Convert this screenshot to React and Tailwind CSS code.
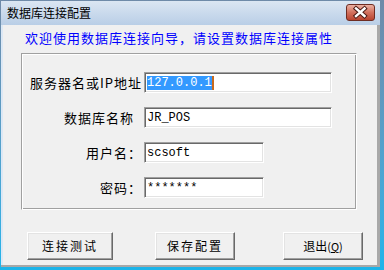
const CJK = "font-['Noto_Sans_CJK_SC',sans-serif]";
const MONO = "font-['Liberation_Mono',monospace]";

function Field({ label, labelClass, widthClass, children }) {
  return (
    <div className="flex items-center h-[21px]">
      <div
        className={`w-[120px] text-right text-[13px] leading-[14px] tracking-[1px] text-black whitespace-nowrap ${CJK} ${labelClass}`}
      >
        {label}
      </div>
      <div
        className={`ml-[2px] h-[21px] ${widthClass} bg-white border border-t-[#a0a0a0] border-l-[#a0a0a0] border-b-white border-r-white shadow-[inset_1px_1px_0_#696969,inset_-1px_-1px_0_#e3e3e3] flex items-center pl-[2px] ${MONO} text-[12px] leading-[14px] text-black whitespace-pre`}
      >
        {children}
      </div>
    </div>
  );
}

function Button({ widthClass, extra, children }) {
  return (
    <div
      className={`h-[28px] ${widthClass} ${extra} bg-[#f0f0f0] border border-t-white border-l-white border-r-[#696969] border-b-[#696969] shadow-[inset_-1px_-1px_0_#a0a0a0,inset_1px_1px_0_#e3e3e3] flex items-center justify-center text-[12px] leading-[14px] text-black ${CJK}`}
    >
      {children}
    </div>
  );
}

export default function App() {
  return (
    <div className="w-[384px] h-[270px] bg-linear-to-b from-[#6f8aa8] to-[#1ab4ea] pt-px pl-px pr-[4px] pb-[3px]">
      <div className="w-full h-full flex flex-col bg-[#dce8f5]">
        {/* Title bar */}
        <div className="h-[24px] flex bg-linear-to-b from-[#dbe6f2] to-[#b9cee6]">
          <div className={`pl-[6px] self-center text-[12px] leading-[12px] text-black ${CJK}`}>
            数据库连接配置
          </div>
          <div className="ml-auto mr-[5px] mt-[3px] w-[29px] h-[17px] rounded-[3px] border border-[#6e2c22] bg-linear-to-b from-[#eab0a2] via-[#d2705d] to-[#b9432f] flex items-center justify-center">
            <svg width="27" height="15" viewBox="0 0 27 15">
              <path d="M9 3.5 L17.5 11 M17.5 3.5 L9 11" stroke="#4a1a14" strokeWidth="4.4" strokeLinecap="square" fill="none" />
              <path d="M9 3.5 L17.5 11 M17.5 3.5 L9 11" stroke="#ffffff" strokeWidth="2.4" strokeLinecap="square" fill="none" />
            </svg>
          </div>
        </div>

        {/* Body */}
        <div className="flex-1 flex pl-[2px] border-r-[3px] border-r-[#a8a8a8] border-b-2 border-b-[#a8a8a8]">
          <div className="w-[374px] h-[240px] bg-[#f0f0f0] flex flex-col">
            <div className={`pt-[6px] pl-[22px] text-[13px] leading-[14px] tracking-[1px] text-[#0000ff] whitespace-nowrap ${CJK}`}>
              欢迎使用数据库连接向导，请设置数据库连接属性
            </div>

            <div className="mt-[8px] ml-[18px] w-[336px] h-[157px] border border-t-[#a0a0a0] border-l-[#a0a0a0] border-b-white border-r-white shadow-[inset_1px_1px_0_#ffffff,inset_-1px_-1px_0_#a0a0a0] pt-[18px] flex flex-col gap-[14px]">
              <Field label="服务器名或IP地址" labelClass="" widthClass="w-[188px]">
                <span className="bg-[#3399ff] text-white">127.0.0.1</span>
                <span className="inline-block w-[2px] h-[14px] bg-[#c86a1e]"></span>
              </Field>
              <Field label="数据库名称" labelClass="pr-[8px]" widthClass="w-[188px]">
                JR_POS
              </Field>
              <Field label="用户名：" labelClass="" widthClass="w-[120px]">
                scsoft
              </Field>
              <Field label="密码：" labelClass="" widthClass="w-[120px]">
                *******
              </Field>
            </div>

            <div className="mt-[22px] pl-[24px] flex">
              <Button widthClass="w-[86px]" extra="tracking-[2px]">
                连接测试
              </Button>
              <Button widthClass="w-[80px]" extra="ml-[42px] tracking-[2px]">
                保存配置
              </Button>
              <Button widthClass="w-[80px]" extra="ml-[48px]">
                <span>退出</span>
                <span className="text-[11px]">
                  (<span className="underline">Q</span>)
                </span>
              </Button>
            </div>
          </div>
        </div>
      </div>
    </div>
  );
}
